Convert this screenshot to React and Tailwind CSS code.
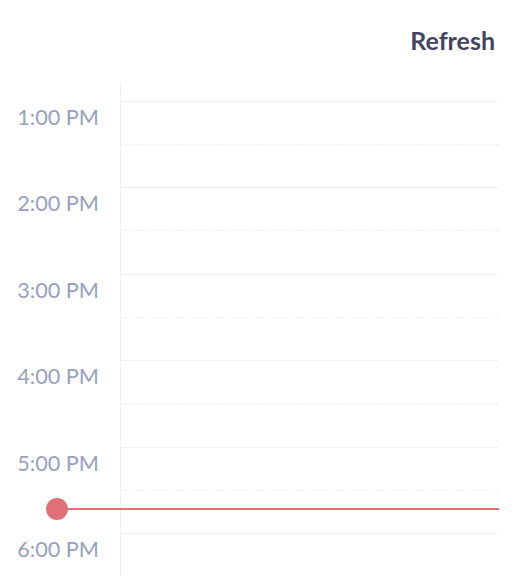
const hours = ['1:00 PM', '2:00 PM', '3:00 PM', '4:00 PM', '5:00 PM', '6:00 PM']

export default function App() {
  return (
    <div className="w-[526px] h-[576px] overflow-hidden bg-white font-['Lato',sans-serif]">
      <div className="h-[82px] flex items-center justify-end pr-[31px] pb-[2px]">
        <button className="text-[25px] font-bold text-[#434560] leading-none">Refresh</button>
      </div>

      <div className="relative flex">
        {/* time labels */}
        <div className="w-[120px] shrink-0 pt-[19px]">
          {hours.map((h) => (
            <div key={h} className="h-[86.4px] pr-[21px] pt-[3px] text-right">
              <span className="text-[21.7px] leading-[26px] text-[#98a0c0]">{h}</span>
            </div>
          ))}
        </div>

        {/* grid */}
        <div className="flex-1 mr-[27px] border-l border-[#eef0f5] pt-[19px]">
          {hours.map((h) => (
            <div key={h} className="h-[86.4px] border-t border-[#f0f1f5] flex flex-col">
              <div className="h-[42px]" />
              <div className="border-t border-dashed border-[#eef0f6]" />
            </div>
          ))}
        </div>

        {/* current time indicator */}
        <div className="absolute left-[46px] right-[27px] top-[416px] flex items-center">
          <div className="w-[22px] h-[22px] rounded-full bg-[#e07078] shrink-0" />
          <div className="flex-1 h-[2px] bg-[#e07078]" />
        </div>
      </div>
    </div>
  )
}
